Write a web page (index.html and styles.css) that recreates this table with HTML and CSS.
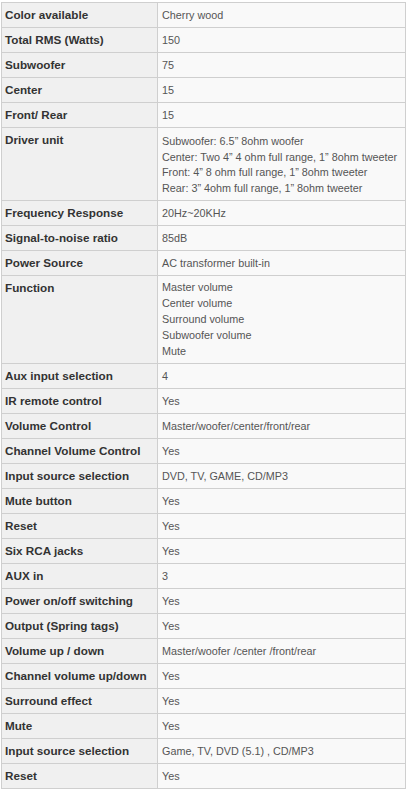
FILE: index.html
```html
<!DOCTYPE html>
<html>
<head>
<meta charset="utf-8">
<link rel="stylesheet" href="styles.css">
</head>
<body>
<table class="spec">
<tbody>
<tr><th>Color available</th><td>Cherry wood</td></tr>
<tr><th>Total RMS (Watts)</th><td>150</td></tr>
<tr><th>Subwoofer</th><td>75</td></tr>
<tr><th>Center</th><td>15</td></tr>
<tr><th>Front/ Rear</th><td>15</td></tr>
<tr class="driver"><th>Driver unit</th><td class="multi">Subwoofer: 6.5” 8ohm woofer<br>Center: Two 4” 4 ohm full range, 1” 8ohm tweeter<br>Front: 4” 8 ohm full range, 1” 8ohm tweeter<br>Rear: 3” 4ohm full range, 1” 8ohm tweeter</td></tr>
<tr><th>Frequency Response</th><td>20Hz~20KHz</td></tr>
<tr><th>Signal-to-noise ratio</th><td>85dB</td></tr>
<tr><th>Power Source</th><td>AC transformer built-in</td></tr>
<tr><th>Function</th><td class="multi">Master volume<br>Center volume<br>Surround volume<br>Subwoofer volume<br>Mute</td></tr>
<tr><th>Aux input selection</th><td>4</td></tr>
<tr><th>IR remote control</th><td>Yes</td></tr>
<tr><th>Volume Control</th><td>Master/woofer/center/front/rear</td></tr>
<tr><th>Channel Volume Control</th><td>Yes</td></tr>
<tr><th>Input source selection</th><td>DVD, TV, GAME, CD/MP3</td></tr>
<tr><th>Mute button</th><td>Yes</td></tr>
<tr><th>Reset</th><td>Yes</td></tr>
<tr><th>Six RCA jacks</th><td>Yes</td></tr>
<tr><th>AUX in</th><td>3</td></tr>
<tr><th>Power on/off switching</th><td>Yes</td></tr>
<tr><th>Output (Spring tags)</th><td>Yes</td></tr>
<tr><th>Volume up / down</th><td>Master/woofer /center /front/rear</td></tr>
<tr><th>Channel volume up/down</th><td>Yes</td></tr>
<tr><th>Surround effect</th><td>Yes</td></tr>
<tr><th>Mute</th><td>Yes</td></tr>
<tr><th>Input source selection</th><td>Game, TV, DVD (5.1) , CD/MP3</td></tr>
<tr><th>Reset</th><td>Yes</td></tr>
</tbody>
</table>
</body>
</html>
```
FILE: styles.css
```css
html, body {
  margin: 0;
  padding: 0;
  background: #ffffff;
}

.spec {
  margin: 2px 0 0 1px;
  width: 405px;
  table-layout: fixed;
  border-collapse: separate;
  border-spacing: 0;
  border-top: 1px solid #cfcfcf;
  border-left: 1px solid #cfcfcf;
  font-family: "Liberation Sans", Arial, sans-serif;
}

.spec th,
.spec td {
  border-right: 1px solid #cfcfcf;
  border-bottom: 1px solid #cfcfcf;
  vertical-align: top;
  text-align: left;
  height: 16px;
}

.spec th {
  width: 152px;
  padding: 4px 0 4px 3px;
  background: #f0f0f0;
  color: #333333;
  font-size: 11.7px;
  font-weight: bold;
  line-height: 16px;
}

.spec td {
  padding: 4px 0 4px 4px;
  background: #f9f9f9;
  color: #555555;
  font-size: 10.8px;
  line-height: 16px;
  white-space: nowrap;
  overflow: hidden;
}

.spec td.multi {
  line-height: 15.8px;
}

.driver td.multi {
  padding-top: 6px;
  padding-bottom: 4px;
  line-height: 15.6px;
}
```
